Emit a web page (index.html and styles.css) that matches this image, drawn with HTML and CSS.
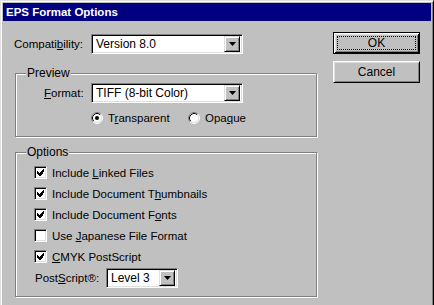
FILE: index.html
```html
<!DOCTYPE html>
<html>
<head>
<meta charset="utf-8">
<link rel="stylesheet" href="styles.css">
</head>
<body>
<div class="window">
  <div class="titlebar">EPS Format Options</div>
  <div class="content">
    <div class="main">
      <div class="row compat">
        <span class="lbl lbl-compat">Compati<u>b</u>ility:</span>
        <div class="select sel-wide"><span class="val">Version 8.0</span><span class="arrow"><svg width="7" height="4" viewBox="0 0 7 4"><polygon points="0,0 7,0 3.5,4" fill="#000"/></svg></span></div>
      </div>
      <fieldset class="group preview">
        <legend>Preview</legend>
        <div class="row format">
          <span class="lbl lbl-format"><u>F</u>ormat:</span>
          <div class="select sel-wide"><span class="val">TIFF (8-bit Color)</span><span class="arrow"><svg width="7" height="4" viewBox="0 0 7 4"><polygon points="0,0 7,0 3.5,4" fill="#000"/></svg></span></div>
        </div>
        <div class="radios">
          <div class="radio r-first">
            <svg class="rad" width="12" height="12" viewBox="0 0 12 12"><circle cx="6" cy="6" r="5" fill="#fff"/><path d="M2.11 9.89 A5.5 5.5 0 0 1 9.89 2.11" fill="none" stroke="#808080"/><path d="M9.89 2.11 A5.5 5.5 0 0 1 2.11 9.89" fill="none" stroke="#fff"/><path d="M2.82 9.18 A4.5 4.5 0 0 1 9.18 2.82" fill="none" stroke="#000"/><path d="M9.18 2.82 A4.5 4.5 0 0 1 2.82 9.18" fill="none" stroke="#dfdfdf"/><circle cx="6" cy="6" r="2" fill="#000"/></svg>
            <span>T<u>r</u>ansparent</span>
          </div>
          <div class="radio">
            <svg class="rad" width="12" height="12" viewBox="0 0 12 12"><circle cx="6" cy="6" r="5" fill="#fff"/><path d="M2.11 9.89 A5.5 5.5 0 0 1 9.89 2.11" fill="none" stroke="#808080"/><path d="M9.89 2.11 A5.5 5.5 0 0 1 2.11 9.89" fill="none" stroke="#fff"/><path d="M2.82 9.18 A4.5 4.5 0 0 1 9.18 2.82" fill="none" stroke="#000"/><path d="M9.18 2.82 A4.5 4.5 0 0 1 2.82 9.18" fill="none" stroke="#dfdfdf"/></svg>
            <span>Opa<u>q</u>ue</span>
          </div>
        </div>
      </fieldset>
      <fieldset class="group options">
        <legend>Options</legend>
        <div class="checks">
          <div class="check"><span class="box on"><svg width="7" height="7" viewBox="0 0 7 7" shape-rendering="crispEdges"><path d="M6 0h1v3h-1zM5 1h1v4h-1zM4 2h1v4h-1zM3 3h1v4h-1zM2 4h1v3h-1zM1 3h1v3h-1zM0 2h1v3h-1z" fill="#000"/></svg></span><span>Include <u>L</u>inked Files</span></div>
          <div class="check"><span class="box on"><svg width="7" height="7" viewBox="0 0 7 7" shape-rendering="crispEdges"><path d="M6 0h1v3h-1zM5 1h1v4h-1zM4 2h1v4h-1zM3 3h1v4h-1zM2 4h1v3h-1zM1 3h1v3h-1zM0 2h1v3h-1z" fill="#000"/></svg></span><span>Include Document T<u>h</u>umbnails</span></div>
          <div class="check"><span class="box on"><svg width="7" height="7" viewBox="0 0 7 7" shape-rendering="crispEdges"><path d="M6 0h1v3h-1zM5 1h1v4h-1zM4 2h1v4h-1zM3 3h1v4h-1zM2 4h1v3h-1zM1 3h1v3h-1zM0 2h1v3h-1z" fill="#000"/></svg></span><span>Include Document F<u>o</u>nts</span></div>
          <div class="check"><span class="box"></span><span>Use <u>J</u>apanese File Format</span></div>
          <div class="check"><span class="box on"><svg width="7" height="7" viewBox="0 0 7 7" shape-rendering="crispEdges"><path d="M6 0h1v3h-1zM5 1h1v4h-1zM4 2h1v4h-1zM3 3h1v4h-1zM2 4h1v3h-1zM1 3h1v3h-1zM0 2h1v3h-1z" fill="#000"/></svg></span><span><u>C</u>MYK PostScript</span></div>
        </div>
        <div class="row ps">
          <span class="lbl lbl-ps">Post<u>S</u>cript®:</span>
          <div class="select sel-small"><span class="val">Level 3</span><span class="arrow"><svg width="7" height="4" viewBox="0 0 7 4"><polygon points="0,0 7,0 3.5,4" fill="#000"/></svg></span></div>
        </div>
      </fieldset>
    </div>
    <div class="buttons">
      <div class="btn default"><span class="focus">OK</span></div>
      <div class="btn">Cancel</div>
    </div>
  </div>
</div>
</body>
</html>
```

FILE: styles.css
```css
html, body {
  margin: 0;
  padding: 0;
  background: #c0c0c0;
  overflow: hidden;
}
body {
  font-family: "Liberation Sans", Arial, sans-serif;
  font-size: 11.5px;
  color: #000;
}
u {
  text-underline-offset: 1px;
}
.window {
  width: 434px;
  height: 320px;
  box-sizing: border-box;
  border: 1px solid;
  border-color: #dfdfdf #000 #000 #dfdfdf;
  box-shadow: inset 1px 1px 0 #fff, inset -1px -1px 0 #808080;
  padding: 2px;
  background: #c0c0c0;
}
.titlebar {
  height: 18px;
  line-height: 18px;
  background: #000080;
  color: #fff;
  font-weight: bold;
  font-size: 11.5px;
  padding-left: 3px;
}
.content {
  display: flex;
  padding: 12px 0 0 11px;
}
.main {
  width: 303px;
  display: flex;
  flex-direction: column;
}
.row {
  display: flex;
  align-items: center;
  height: 20px;
}
.compat {
  margin-top: 1px;
}
.lbl-compat { width: 77px; }
.lbl-format { width: 47px; margin-left: 28px; }
.lbl-ps { width: 71px; margin-left: 19px; }
.select {
  box-sizing: border-box;
  height: 20px;
  display: flex;
  align-items: center;
  border: 1px solid;
  border-color: #808080 #fff #fff #808080;
  box-shadow: inset 1px 1px 0 #000, inset -1px -1px 0 #dfdfdf;
  background: #fff;
  padding: 2px;
}
.sel-wide { width: 152px; }
.sel-small { width: 72px; }
.val {
  flex: 1;
  padding-left: 2px;
  font-size: 12px;
  line-height: 16px;
}
.arrow {
  box-sizing: border-box;
  width: 16px;
  height: 16px;
  display: flex;
  align-items: center;
  justify-content: center;
  background: #c0c0c0;
  border: 1px solid;
  border-color: #dfdfdf #000 #000 #dfdfdf;
  box-shadow: inset 1px 1px 0 #fff, inset -1px -1px 0 #808080;
}
.group {
  box-sizing: border-box;
  width: 302px;
  margin: 0 0 0 1px;
  padding: 0;
  min-width: 0;
  border: 1px solid #808080;
  box-shadow: inset 1px 1px 0 #fff, 1px 1px 0 #fff;
}
.group legend {
  margin-left: 10px;
  padding: 0 1px;
  line-height: 13px;
  font-size: 12px;
  background: #c0c0c0;
}
.preview {
  margin-top: 13px;
  padding-bottom: 12px;
}
.format {
  margin-top: 3px;
}
.radios {
  display: flex;
  align-items: center;
  height: 13px;
  margin: 8px 0 0 75px;
}
.radio {
  display: flex;
  align-items: center;
  gap: 5px;
}
.r-first { width: 97px; }
.rad { display: block; flex: none; }
.options {
  margin-top: 9px;
  padding-top: 7px;
  padding-bottom: 8px;
}
.checks {
  display: flex;
  flex-direction: column;
  gap: 8px;
  margin-left: 18px;
}
.check {
  display: flex;
  align-items: center;
  gap: 5px;
  height: 13px;
}
.box {
  box-sizing: border-box;
  width: 13px;
  height: 13px;
  flex: none;
  border: 1px solid;
  border-color: #808080 #fff #fff #808080;
  box-shadow: inset 1px 1px 0 #000, inset -1px -1px 0 #dfdfdf;
  background: #fff;
  display: flex;
  align-items: center;
  justify-content: center;
}
.box svg { display: block; }
.ps {
  margin-top: 5px;
}
.buttons {
  display: flex;
  flex-direction: column;
  gap: 7px;
  margin-left: 16px;
  margin-top: -1px;
}
.btn {
  box-sizing: border-box;
  width: 87px;
  height: 22px;
  display: flex;
  align-items: center;
  justify-content: center;
  border: 1px solid;
  border-color: #fff #000 #000 #fff;
  box-shadow: inset 1px 1px 0 #dfdfdf, inset -1px -1px 0 #808080;
  font-size: 12px;
}
.btn.default {
  border: 1px solid #000;
  box-shadow: inset 1px 1px 0 #fff, inset -1px -1px 0 #000, inset 2px 2px 0 #dfdfdf, inset -2px -2px 0 #808080;
  padding: 3px;
}
.focus {
  flex: 1;
  align-self: stretch;
  display: flex;
  align-items: center;
  justify-content: center;
  border: 1px dotted #000;
}
```
